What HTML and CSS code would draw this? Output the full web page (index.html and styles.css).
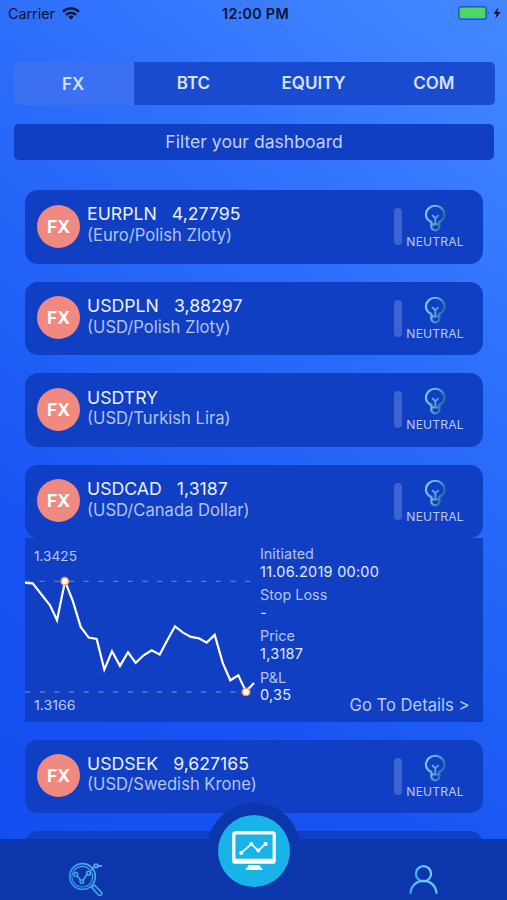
FILE: index.html
```html
<!DOCTYPE html>
<html lang="en">
<head>
<meta charset="utf-8">
<title>Dashboard</title>
<link rel="stylesheet" href="styles.css">
</head>
<body>
<svg class="defs" width="0" height="0" aria-hidden="true">
  <defs>
    <linearGradient id="bulb-ink" gradientUnits="userSpaceOnUse" x1="2" y1="4" x2="22" y2="10">
      <stop offset="0" stop-color="#7cc9f5"/><stop offset="0.55" stop-color="#69addc"/><stop offset="1" stop-color="#2d6cae"/>
    </linearGradient>
    <linearGradient id="nav-ink" x1="0" y1="1" x2="1" y2="0">
      <stop offset="0" stop-color="#28a4e8"/><stop offset="1" stop-color="#83d2ff"/>
    </linearGradient>
    <linearGradient id="search-ink" gradientUnits="userSpaceOnUse" x1="2" y1="30" x2="32" y2="4">
      <stop offset="0" stop-color="#2391dd"/><stop offset="1" stop-color="#56b0ee"/>
    </linearGradient>
    <symbol id="bulb" viewBox="0 0 24 30">
      <g fill="none" stroke="url(#bulb-ink)" stroke-width="2.300">
        <path d="M7.700 21.200v-2.600C4 16.800 2 14 2 11A9.700 9.300 0 0 1 21.400 11c0 3-2 5.800-5.400 7.600v2.600z"/>
        <path d="M7.700 21.200v2.200a4.100 4 0 0 0 8.300 0v-2.200"/>
        <path d="M8.600 11.500l3.300 3.300 3.300-3.300M11.900 14.800v6" stroke-width="2"/>
      </g>
    </symbol>
  </defs>
</svg>
<div class="screen">
  <header class="status">
    <div class="carrier"><span>Carrier</span>
      <svg width="18" height="13" viewBox="0 0 18 13" fill="none" stroke="#06142f" stroke-width="2.300"><path d="M1 4.700a11.300 11.300 0 0 1 16 0M3.900 7.900a7.200 7.200 0 0 1 10.200 0"/><path d="M9 12.600l-2.700-2.800a3.900 3.900 0 0 1 5.400 0z" fill="#06142f" stroke="none"/></svg>
    </div>
    <div class="clock">12:00 PM</div>
    <div class="power">
      <svg width="44" height="14" viewBox="0 0 44 14"><rect x=".7" y=".7" width="27.600" height="12.600" rx="2.600" fill="none" stroke="#245bb3" stroke-width="1.200"/><rect x="2" y="2" width="25" height="10" rx="1.200" fill="#4bd964"/><path d="M29.800 4.800q2 2.200 0 4.400z" fill="#245bb3"/><path d="M40.500 1.200l-5 6.500h3.100l-1.300 5.100 5.300-6.800h-3.300z" fill="#06142f"/></svg>
    </div>
  </header>

  <nav class="tabs">
    <div class="tab active">FX</div><div class="tab">BTC</div><div class="tab">EQUITY</div><div class="tab">COM</div>
  </nav>
  <div class="filter">Filter your dashboard</div>

  <main class="list">
    <article class="card">
      <div class="badge">FX</div>
      <div class="pair"><div class="quote"><span>EURPLN</span><span>4,27795</span></div><div class="name">(Euro/Polish Zloty)</div></div>
      <div class="bar"></div>
      <div class="signal"><svg class="bulb"><use href="#bulb"/></svg><span>NEUTRAL</span></div>
    </article>
    <article class="card">
      <div class="badge">FX</div>
      <div class="pair"><div class="quote"><span>USDPLN</span><span>3,88297</span></div><div class="name">(USD/Polish Zloty)</div></div>
      <div class="bar"></div>
      <div class="signal"><svg class="bulb"><use href="#bulb"/></svg><span>NEUTRAL</span></div>
    </article>
    <article class="card">
      <div class="badge">FX</div>
      <div class="pair"><div class="quote"><span>USDTRY</span></div><div class="name">(USD/Turkish Lira)</div></div>
      <div class="bar"></div>
      <div class="signal"><svg class="bulb"><use href="#bulb"/></svg><span>NEUTRAL</span></div>
    </article>
    <section class="expanded">
      <article class="card">
        <div class="badge">FX</div>
        <div class="pair"><div class="quote"><span>USDCAD</span><span>1,3187</span></div><div class="name">(USD/Canada Dollar)</div></div>
        <div class="bar"></div>
        <div class="signal"><svg class="bulb"><use href="#bulb"/></svg><span>NEUTRAL</span></div>
      </article>
      <div class="panel">
        <svg class="chart" viewBox="0 0 235 183">
          <path d="M0 43.300H228M0 154H228" stroke="#687bb0" stroke-width="1.300" stroke-dasharray="5.200 9.470"/>
          <polyline fill="none" stroke="#fff" stroke-width="2.200" points="0,44.900 7.700,45.300 25,67.300 32,82.300 40,43.300 47.700,62.600 55.700,88.900 63.700,99.600 71.700,100.900 79.300,131.600 87,113.300 95,127.900 103,114.300 110.700,124.900 118.700,117.300 126.700,112.300 134.700,116.600 142.300,102.300 150,88.300 158,94.600 166,98.900 174,100.300 181.700,104.600 189.700,96.900 197.700,124.900 205.300,142.300 213.300,137.300 221,153.600 229,144.900"/>
          <g fill="#fff" stroke="#f2a93b" stroke-width="1.500"><circle cx="39.800" cy="43.300" r="3.700"/><circle cx="221" cy="153.900" r="3.700"/></g>
          <text class="axis" x="9" y="23.300" textLength="43" lengthAdjust="spacingAndGlyphs">1.3425</text>
          <text class="axis" x="9" y="172.300" textLength="41.500" lengthAdjust="spacingAndGlyphs">1.3166</text>
        </svg>
        <dl class="facts">
          <dt>Initiated</dt><dd>11.06.2019 00:00</dd>
          <dt>Stop Loss</dt><dd>-</dd>
          <dt>Price</dt><dd>1,3187</dd>
          <dt>P&amp;L</dt><dd>0,35</dd>
        </dl>
        <div class="details">Go To Details &gt;</div>
      </div>
    </section>
    <article class="card">
      <div class="badge">FX</div>
      <div class="pair"><div class="quote"><span>USDSEK</span><span>9,627165</span></div><div class="name">(USD/Swedish Krone)</div></div>
      <div class="bar"></div>
      <div class="signal"><svg class="bulb"><use href="#bulb"/></svg><span>NEUTRAL</span></div>
    </article>
    <article class="card"></article>
  </main>

  <footer class="dock">
    <svg class="search" width="35" height="35" viewBox="0 0 35 35" fill="none" stroke="url(#search-ink)">
      <circle cx="14.500" cy="15.500" r="12.800" stroke-width="1.700"/>
      <path d="M21.800 8.700a10.300 10.300 0 1 0 1.800 2.700" stroke-width="1.200"/>
      <g stroke-width="1.700"><path d="M9.300 15l3.300 4.200M15 19.300l4.200-6M22 10.700l4.300-4.900M29.800 4.800h4.200"/><circle cx="7.800" cy="13.600" r="1.900"/><circle cx="13.800" cy="20.500" r="1.700"/><circle cx="20.500" cy="12.200" r="1.900"/><circle cx="28" cy="4.800" r="1.800"/><path d="M23.600 26.400l2.700-2.400 6.900 7.200a1.900 1.900 0 0 1-2.800 2.700z"/></g>
    </svg>
    <svg class="user" width="29" height="29" viewBox="0 0 29 29" fill="none" stroke="url(#nav-ink)" stroke-width="2.300"><circle cx="14.500" cy="8.800" r="7.600"/><path d="M1.500 28.700a13 12.800 0 0 1 26 0"/></svg>
    <div class="hub">
      <div class="disc">
        <svg width="44" height="40" viewBox="0 0 44 40" fill="none" stroke="#fff"><rect x="1.800" y="1.800" width="40.400" height="29.400" rx="1.500" stroke-width="3.200"/><path d="M1 29.600h42" stroke-width="3.500"/><path d="M17 34h10l4 5H13z" fill="#fff" stroke="none"/><path d="M9.300 21.800l10-8.700 7 6.500 7.200-6.700" stroke-width="1.700"/><g fill="#fff" stroke="none"><circle cx="9.300" cy="21.800" r="2.100"/><circle cx="19.300" cy="13.100" r="2"/><circle cx="26.300" cy="19.600" r="2"/><circle cx="33.600" cy="12.900" r="2.100"/></g></svg>
      </div>
    </div>
  </footer>
</div>
</body>
</html>
```

FILE: styles.css
```css
* { box-sizing: border-box; }
body { margin: 0; font-family: Inter, "Liberation Sans", sans-serif; }
.defs { position: absolute; }
.screen {
  position: relative; width: 507px; height: 900px; overflow: hidden;
  background: linear-gradient(218deg, #4488ff 0%, #397cff 16%, #2d6efb 31%, #2060f6 54%, #1852f1 72%, #134df0 100%);
}
.status { display: grid; grid-template-columns: 1fr auto 1fr; align-items: center; height: 27px; padding: 0 4px 0 8px; color: #06142f; }
.carrier { display: flex; align-items: center; gap: 7px; font-size: 14.300px; }
.clock { font-size: 14.300px; font-weight: 600; letter-spacing: .3px; }
.power { display: flex; justify-content: flex-end; position: relative; left: -1px; top: -1px; }
.tabs { display: flex; width: 481px; height: 43px; margin: 35px 0 0 14px; border-radius: 5px; overflow: hidden; background: #184bd0; }
.tab { flex: 1; display: flex; align-items: center; justify-content: center; padding: 0 2px 1px 0; color: #d7e2fb; font-size: 17px; font-weight: 600; }
.tab.active { background: #3c70f2; color: #d3e2ff; padding: 0 2px 0 0; }
.filter { display: flex; align-items: center; justify-content: center; width: 480px; height: 36px; margin: 18.500px 0 0 14px; border-radius: 5px; background: #113fc4; color: #c0cff3; font-size: 17.600px; }
.list { display: flex; flex-direction: column; gap: 18.200px; margin: 30.700px 25px 0; }
.card { display: flex; flex: none; width: 457.500px; height: 73.400px; padding-left: 12px; border-radius: 13px; background: #113fc4; }
.badge { display: flex; align-items: center; justify-content: center; width: 43px; height: 43px; margin-top: 14.500px; border-radius: 50%; background: #f0897f; color: #fff; font-size: 17.500px; font-weight: 700; }
.pair { flex: 1; margin: 13.200px 0 0 7px; white-space: nowrap; }
.quote { display: flex; gap: 15px; height: 21.600px; line-height: 21px; font-size: 17.700px; color: #e9effc; }
.name { line-height: 21px; font-size: 16.600px; color: #b3c3ee; }
.bar { width: 8px; height: 37px; margin-top: 18px; border-radius: 4px; background: #3d63d3; }
.signal { display: flex; flex-direction: column; align-items: center; width: 67px; margin: 14px 14px 0 0; color: #b7c8f2; font-size: 12.200px; line-height: 17px; letter-spacing: .1px; }
.bulb { width: 23px; height: 29px; }
.panel { display: flex; position: relative; width: 457.500px; height: 183.200px; background: #113fc4; }
.chart { width: 235px; height: 183px; }
.axis { fill: #b9c9f1; font-size: 13.500px; }
.facts { margin: 6.700px 0 0; font-size: 14.400px; line-height: 17.500px; color: #e2e9fb; }
.facts dt { color: #b3c3ee; }
.facts dd { margin: 0 0 6.200px; font-size: 14.500px; letter-spacing: .25px; }
.details { position: absolute; right: 13px; bottom: 5.500px; font-size: 16.600px; line-height: 21px; color: #b9c9f1; }
.dock { position: absolute; left: 0; right: 0; bottom: 0; height: 61.500px; display: flex; justify-content: space-between; padding: 0 69px 0 68px; background: #0c37ac; }
.search { margin-top: 22px; }
.user { margin-top: 26px; }
.hub { position: absolute; left: 207px; top: -36px; width: 94px; height: 97px; padding: 12px 0 0 11px; border-radius: 47px 47px 0 0; background: #0c37ac; }
.disc { display: flex; align-items: center; justify-content: center; width: 72px; height: 72px; border-radius: 50%; background: #18b3e7; }
```
